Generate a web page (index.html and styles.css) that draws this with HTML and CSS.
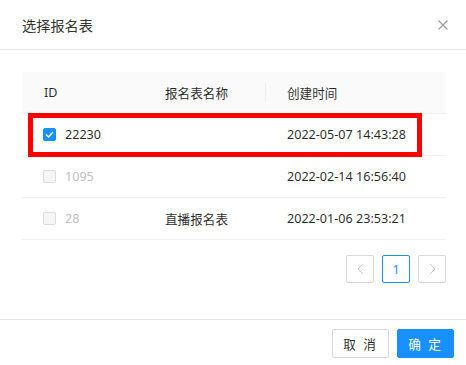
FILE: index.html
```html
<!DOCTYPE html>
<html lang="zh-CN">
<head>
    <meta charset="UTF-8">
    <title>选择报名表</title>
    <link rel="stylesheet" href="styles.css">
</head>
<body>
    <div class="modal">
        <div class="modal-header">
            <span class="modal-title">选择报名表</span>
            <svg class="close" width="10" height="10" viewBox="0 0 10 10">
                <path d="M0.5 0.5 L9.5 9.5 M9.5 0.5 L0.5 9.5" stroke="#999" stroke-width="1.1" fill="none"/>
            </svg>
        </div>
        <div class="modal-body">
            <div class="table">
                <div class="row head">
                    <div class="cell">ID</div>
                    <div class="cell">报名表名称</div>
                    <div class="cell sep">创建时间</div>
                </div>
                <div class="row">
                    <div class="cell">
                        <span class="checkbox checked">
                            <svg width="9" height="7" viewBox="0 0 9 7">
                                <path d="M1 3.5 L3.5 6 L8 1" stroke="#fff" stroke-width="1.3" fill="none"/>
                            </svg>
                        </span>
                        22230
                    </div>
                    <div class="cell"></div>
                    <div class="cell">2022-05-07 14:43:28</div>
                </div>
                <div class="row">
                    <div class="cell disabled"><span class="checkbox"></span>1095</div>
                    <div class="cell"></div>
                    <div class="cell">2022-02-14 16:56:40</div>
                </div>
                <div class="row">
                    <div class="cell disabled"><span class="checkbox"></span>28</div>
                    <div class="cell">直播报名表</div>
                    <div class="cell">2022-01-06 23:53:21</div>
                </div>
                <div class="highlight"></div>
            </div>
            <div class="pagination">
                <span class="page-btn">
                    <svg width="7" height="12" viewBox="0 0 7 12"><path d="M6 1 L1 6 L6 11" stroke="#c8c8c8" stroke-width="1" fill="none"/></svg>
                </span>
                <span class="page-btn active">1</span>
                <span class="page-btn">
                    <svg width="7" height="12" viewBox="0 0 7 12"><path d="M1 1 L6 6 L1 11" stroke="#c8c8c8" stroke-width="1" fill="none"/></svg>
                </span>
            </div>
        </div>
        <div class="modal-footer">
            <button class="btn">取 消</button>
            <button class="btn primary">确 定</button>
        </div>
    </div>
</body>
</html>
```

FILE: styles.css
```css
body {
    margin: 0;
    font-family: "Noto Sans", "Noto Sans CJK SC", sans-serif;
    color: rgba(0, 0, 0, 0.85);
    background: #fff;
}
.modal {
    width: 466px;
}
.modal-header {
    height: 49px;
    display: flex;
    align-items: center;
    justify-content: space-between;
    padding: 0 18px 0 22px;
    border-bottom: 1px solid #e8e8e8;
}
.modal-title {
    font-size: 14.2px;
    color: #333;
}
.modal-body {
    padding: 22px 20px 36px 22px;
}
.table {
    position: relative;
    font-size: 12.6px;
}
.row {
    display: grid;
    grid-template-columns: 121px 122px 1fr;
    height: 41px;
    border-bottom: 1px solid #f0f0f0;
}
.row.head {
    background: #fafafa;
}
.cell {
    display: flex;
    align-items: center;
    padding-left: 22px;
    position: relative;
    white-space: nowrap;
}
.cell.sep::before {
    content: "";
    position: absolute;
    left: 0;
    top: 11px;
    height: 19px;
    width: 1px;
    background: #ececec;
}
.cell.disabled {
    color: #c0c0c0;
}
.checkbox {
    width: 13px;
    height: 13px;
    box-sizing: border-box;
    border: 1px solid #dcdcdc;
    background: #f5f5f5;
    border-radius: 2px;
    margin-left: -1px;
    margin-right: 9px;
    display: inline-flex;
    align-items: center;
    justify-content: center;
}
.checkbox.checked {
    background: #1890ff;
    border-color: #1890ff;
}
.highlight {
    position: absolute;
    left: 6px;
    top: 41px;
    width: 394px;
    height: 44px;
    box-sizing: border-box;
    border: 5px solid #f00;
}
.pagination {
    display: flex;
    justify-content: flex-end;
    gap: 8px;
    margin-top: 15px;
}
.page-btn {
    width: 28px;
    height: 28px;
    box-sizing: border-box;
    border: 1px solid #d9d9d9;
    border-radius: 2px;
    display: flex;
    align-items: center;
    justify-content: center;
    font-size: 12.6px;
}
.page-btn.active {
    border-color: #1890ff;
    color: #1890ff;
}
.modal-footer {
    border-top: 1px solid #e8e8e8;
    padding: 9px 12px 0 0;
    display: flex;
    justify-content: flex-end;
    gap: 8px;
}
.btn {
    height: 29px;
    width: 57px;
    font-family: inherit;
    font-size: 12.6px;
    border: 1px solid #d9d9d9;
    border-radius: 2px;
    background: #fff;
    color: rgba(0, 0, 0, 0.85);
    padding: 0;
    letter-spacing: 2px;
}
.btn.primary {
    background: #1890ff;
    border-color: #1890ff;
    color: #fff;
}
```
